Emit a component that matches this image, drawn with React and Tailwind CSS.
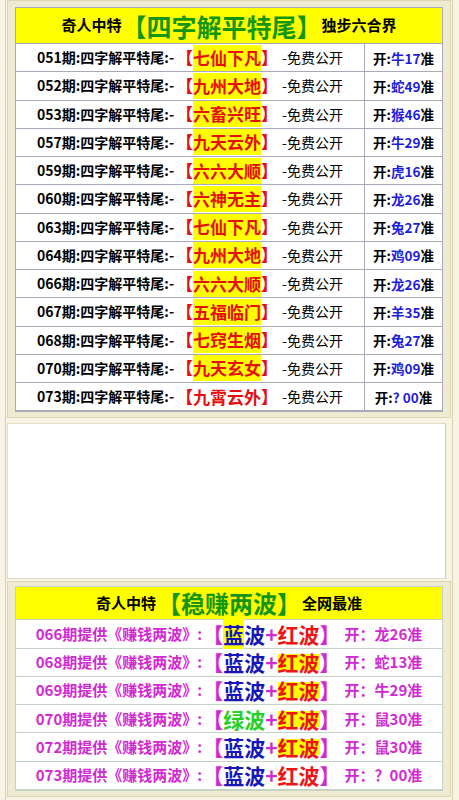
import React from 'react';

const topRows = [
    ['051', '七仙下凡', '牛', '17', true],
    ['052', '九州大地', '蛇', '49', true],
    ['053', '六畜兴旺', '猴', '46', true],
    ['057', '九天云外', '牛', '29', true],
    ['059', '六六大顺', '虎', '16', true],
    ['060', '六神无主', '龙', '26', true],
    ['063', '七仙下凡', '兔', '27', true],
    ['064', '九州大地', '鸡', '09', true],
    ['066', '六六大顺', '龙', '26', true],
    ['067', '五福临门', '羊', '35', true],
    ['068', '七窍生烟', '兔', '27', true],
    ['070', '九天玄女', '鸡', '09', true],
    ['073', '九霄云外', '?', ' 00', false],
];

// mark: 'first' = yellow under the first wave, 'red' = under 红波, '' = none
const waveRows = [
    ['066', '蓝', 'first', '龙26'],
    ['068', '蓝', 'red', '蛇13'],
    ['069', '蓝', 'red', '牛29'],
    ['070', '绿', 'red', '鼠30'],
    ['072', '蓝', 'red', '鼠30'],
    ['073', '蓝', '', '？00'],
];

const TopRow = ({ row }) => {
    const [issue, word, zodiac, num, marked] = row;
    return (
        <div className="flex h-[28.25px] border-b border-[#a9a9b9] bg-white">
            <div className="flex-1 flex items-center justify-center border-r border-[#a9a9b9] text-[14px] text-black whitespace-nowrap">
                <span className="font-bold">{issue}期:四字解平特尾:-</span>
                <span className="text-[17px] font-bold text-[#e60f0f] ml-[2px]">
                    【<span className={marked ? 'bg-[#ffff00] leading-[26px] inline-block' : 'leading-[26px] inline-block'}>{word}</span>】
                </span>
                <span className="ml-[4px]">-免费公开</span>
            </div>
            <div className="w-[77px] flex items-center justify-center text-[13.5px] font-bold text-black whitespace-nowrap">
                开:<span className="text-[#1d1de0]">{zodiac}{num}</span>准
            </div>
        </div>
    );
};

const WaveRow = ({ row }) => {
    const [issue, wave, mark, result] = row;
    const waveColor = wave === '绿' ? 'text-[#25d025]' : 'text-[#1717b8]';
    return (
        <div className="flex h-[28.3px] items-center justify-center border-b border-[#c4d3c4] bg-white font-bold text-[15px] text-[#d22ad2] whitespace-nowrap">
            <span>{issue}期提供《赚钱两波》:</span>
            <span className="text-[21px] leading-[26px]">
                【<span className={waveColor}>
                    <span className={mark === 'first' ? 'bg-[#ffff00]' : ''}>{wave}</span>波
                </span>+<span
                    className={
                        mark === 'red'
                            ? 'text-[#ee1414] bg-[linear-gradient(transparent_24%,#ffff00_24%,#ffff00_78%,transparent_78%)]'
                            : 'text-[#ee1414]'
                    }
                >红波</span>】
            </span>
            <span className="ml-[4px]">开：{result}准</span>
        </div>
    );
};

export default function App() {
    return (
        <div className="w-[459px] h-[800px] overflow-hidden bg-[#f7f4e6] pl-[5px] pr-[6px] font-['Noto_Sans_CJK_SC',sans-serif]">
            <div className="h-full border-l border-r border-[#d8d0ac] px-[1px]">
                <div className="bg-[#efebd3] border border-[#ddd6b3] pt-[6px] px-[7px] pb-[5px]">
                    <div className="border border-[#a9a9b9]">
                        <div className="h-[36px] bg-[#ffff00] flex items-center justify-center border-b border-[#a9a9b9] whitespace-nowrap">
                            <span className="text-[15px] font-bold text-black">奇人中特</span>
                            <span className="text-[25px] font-bold text-[#139613] leading-[30px]">【四字解平特尾】</span>
                            <span className="text-[15px] font-bold text-black">独步六合界</span>
                        </div>
                        {topRows.map((row, i) => (
                            <TopRow key={i} row={row} />
                        ))}
                    </div>
                </div>

                <div className="mt-[5px] h-[156px] bg-white border border-[#e2ddc4] border-r-[#c9c9c9] mr-[5px]" />

                <div className="mt-[2px] bg-[#efebd3] border border-[#ddd6b3] pt-[4px] px-[7px] pb-[5px]">
                    <div className="border border-[#c4d3c4]">
                        <div className="h-[33px] bg-[#ffff00] flex items-center justify-center border-b border-[#c4d3c4] whitespace-nowrap">
                            <span className="text-[15px] font-bold text-black">奇人中特</span>
                            <span className="inline-block text-[24px] font-bold text-[#139613] leading-[28px] mx-[1px]">【稳赚两波】</span>
                            <span className="text-[15px] font-bold text-black">全网最准</span>
                        </div>
                        {waveRows.map((row, i) => (
                            <WaveRow key={i} row={row} />
                        ))}
                    </div>
                </div>
            </div>
        </div>
    );
}
